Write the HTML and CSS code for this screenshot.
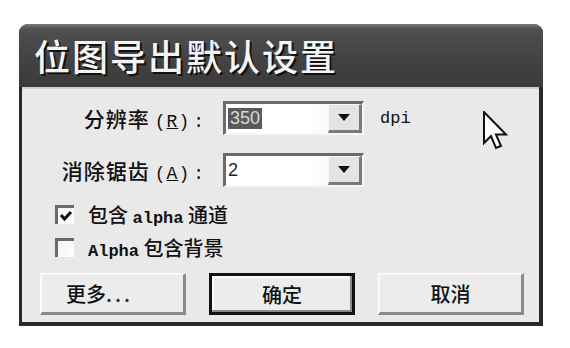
FILE: index.html
```html
<!DOCTYPE html>
<html lang="zh-CN">
<head>
    <meta charset="UTF-8">
    <title>位图导出默认设置</title>
    <link rel="stylesheet" href="styles.css">
</head>
<body>
    <div class="window">
        <div class="title-bar">位图导出默认设置</div>
        <div class="client">
            <div class="field-row">
                <label class="field-label">分辨率<span class="key">(<u>R</u>)</span><span class="colon">:</span></label>
                <div class="combo">
                    <span class="combo-value"><span class="selected">350</span></span>
                    <span class="combo-btn"><span class="arrow"></span></span>
                </div>
                <span class="unit">dpi</span>
            </div>
            <div class="field-row">
                <label class="field-label">消除锯齿<span class="key">(<u>A</u>)</span><span class="colon">:</span></label>
                <div class="combo">
                    <span class="combo-value">2</span>
                    <span class="combo-btn"><span class="arrow"></span></span>
                </div>
            </div>

            <div class="checks">
                <div class="check-row">
                    <span class="check-box checked">
                        <svg width="14" height="12" viewBox="0 0 14 12"><path d="M2 5 L5.5 9 L12 2" fill="none" stroke="#111" stroke-width="3"/></svg>
                    </span>
                    <span class="check-text">包含 <span class="mono">alpha</span> 通道</span>
                </div>
                <div class="check-row">
                    <span class="check-box"></span>
                    <span class="check-text"><span class="mono">Alpha</span> 包含背景</span>
                </div>
            </div>

            <div class="buttons">
                <button class="btn">更多<span class="dots">...</span></button>
                <button class="btn default">确定</button>
                <button class="btn">取消</button>
            </div>
        </div>

        <svg class="cursor" width="26" height="42" viewBox="0 0 13 21">
            <path d="M0.5 0.5 L0.5 16 L4 12.5 L6.5 18.5 L9 17.5 L6.5 11.8 L11.5 11.8 Z" fill="#fff" stroke="#111" stroke-width="1" stroke-linejoin="miter"/>
        </svg>
    </div>
</body>
</html>
```

FILE: styles.css
```css
* {
    margin: 0;
    padding: 0;
    box-sizing: border-box;
}

body {
    background: #ffffff;
    font-family: 'Noto Sans CJK SC', sans-serif;
    color: #111;
}

.window {
    position: relative;
    margin: 24px 0 0 19px;
    width: 524px;
    height: 302px;
    background: #2a2a2a;
    border-radius: 9px 9px 0 0;
    padding: 0 4px 4px 3px;
    display: flex;
    flex-direction: column;
}

.title-bar {
    height: 63px;
    margin: 0 -4px 0 -3px;
    border-radius: 9px 9px 0 0;
    background: linear-gradient(180deg, #7a7a7a 0%, #505050 8%, #444 50%, #3a3a3a 100%);
    color: #f4f4f4;
    font-size: 36px;
    font-weight: 500;
    letter-spacing: 2px;
    line-height: 63px;
    padding-left: 15px;
    text-shadow: 2px 2px 0 #111, 1px 1px 0 #222;
}

.client {
    flex: 1;
    background: #e9e9e9;
    border-top: 2px solid #cfcfcf;
    padding-top: 12px;
    display: flex;
    flex-direction: column;
}

.field-row {
    display: flex;
    align-items: center;
    height: 34px;
    margin-bottom: 18px;
}

.field-label {
    width: 185px;
    text-align: right;
    font-size: 21px;
    font-weight: 500;
    letter-spacing: 1px;
    padding-right: 2px;
    color: #111;
}

.key {
    font-family: 'Liberation Mono', monospace;
    font-size: 18px;
    letter-spacing: 1px;
    margin-left: 5px;
}

.colon {
    font-family: 'Liberation Mono', monospace;
    font-size: 18px;
    margin-left: 3px;
}

.combo {
    margin-left: 16px;
    width: 141px;
    height: 34px;
    display: flex;
    border-top: 3px solid #6a6a6a;
    border-left: 3px solid #6a6a6a;
    border-right: 2px solid #f6f6f6;
    border-bottom: 2px solid #f6f6f6;
    background: linear-gradient(90deg, #ffffff 0%, #ffffff 60%, #f2f2f2 100%);
}

.combo-value {
    flex: 1;
    display: flex;
    align-items: center;
    padding-left: 2px;
    font-family: 'Liberation Sans', sans-serif;
    font-size: 18px;
    color: #222;
}

.selected {
    background: #5a5a5a;
    color: #d8d8d8;
    padding: 0 2px;
    line-height: 21px;
}

.combo-btn {
    width: 34px;
    background: #e4e4e4;
    border-bottom: 3px solid #7a7a7a;
    border-right: 3px solid #7a7a7a;
    border-top: 1px solid #fafafa;
    border-left: 1px solid #fafafa;
    display: flex;
    align-items: center;
    justify-content: center;
}

.arrow {
    width: 0;
    height: 0;
    border-left: 6px solid transparent;
    border-right: 6px solid transparent;
    border-top: 7px solid #111;
}

.unit {
    margin-left: 16px;
    font-family: 'Liberation Mono', monospace;
    font-size: 17px;
    color: #111;
}

.checks {
    margin-left: 33px;
    margin-top: -1px;
    display: flex;
    flex-direction: column;
    gap: 12px;
}

.check-row {
    display: flex;
    align-items: center;
    height: 21px;
}

.check-box {
    width: 19px;
    height: 19px;
    border-top: 3px solid #6a6a6a;
    border-left: 3px solid #6a6a6a;
    background: linear-gradient(135deg, #f4f4f4, #ffffff);
    display: flex;
    align-items: center;
    justify-content: center;
}

.check-text {
    margin-left: 14px;
    font-size: 20px;
    font-weight: 500;
    color: #111;
}

.mono {
    font-family: 'Liberation Mono', monospace;
    font-size: 17px;
    font-weight: 700;
}

.buttons {
    display: flex;
    gap: 23px;
    margin: 15px 0 0 18px;
}

.btn {
    width: 146px;
    height: 42px;
    background: #ececec;
    font-family: 'Noto Sans CJK SC', sans-serif;
    font-size: 20px;
    font-weight: 500;
    color: #111;
    border-top: 2px solid #fafafa;
    border-left: 2px solid #fafafa;
    border-right: 3px solid #8a8a8a;
    border-bottom: 3px solid #8a8a8a;
}

.btn:first-child {
    text-align: left;
    padding-left: 24px;
}

.dots {
    letter-spacing: 3px;
    color: #333;
}

.btn.default {
    border: 3px solid #111;
    box-shadow: inset -2px -2px 0 #8a8a8a, inset 2px 2px 0 #fafafa;
}

.cursor {
    position: absolute;
    left: 464px;
    top: 87px;
}
```
